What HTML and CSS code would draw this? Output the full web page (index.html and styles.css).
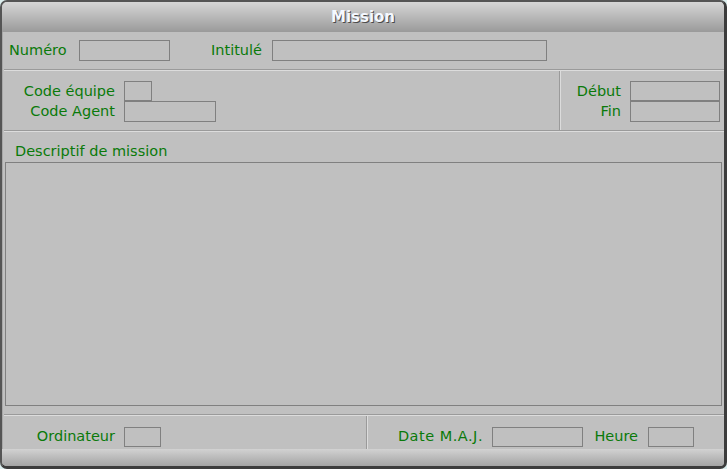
FILE: index.html
```html
<!DOCTYPE html>
<html lang="fr">
<head>
<meta charset="utf-8">
<title>Mission</title>
<link rel="stylesheet" href="styles.css">
</head>
<body>
<div class="window">
  <div class="titlebar"><span class="title">Mission</span></div>
  <div class="content">
    <div class="row1">
      <span class="lbl w-num">Numéro</span>
      <span class="field f-num"></span>
      <span class="lbl w-int">Intitulé</span>
      <span class="field f-int"></span>
    </div>
    <div class="groove-h"></div>
    <div class="sec2">
      <div class="panel-left grid-left">
        <span class="lbl r">Code équipe</span><span class="field f-eq top"></span>
        <span class="lbl r">Code Agent</span><span class="field f-ag"></span>
      </div>
      <div class="groove-v"></div>
      <div class="panel-right grid-right">
        <span class="lbl r">Début</span><span class="field f-date top"></span>
        <span class="lbl r">Fin</span><span class="field f-date"></span>
      </div>
    </div>
    <div class="groove-h"></div>
    <div class="sec3">
      <div class="lbl desc">Descriptif de mission</div>
      <div class="memo"></div>
    </div>
    <div class="groove-h"></div>
    <div class="sec4">
      <div class="foot-left">
        <span class="lbl r w-ord">Ordinateur</span>
        <span class="field f-ord"></span>
      </div>
      <div class="groove-v"></div>
      <div class="foot-right">
        <span class="lbl r w-maj">Date M.A.J.</span>
        <span class="field f-maj"></span>
        <span class="lbl r w-heure">Heure</span>
        <span class="field f-heure"></span>
      </div>
    </div>
  </div>
  <div class="bottombar"></div>
</div>
</body>
</html>
```
FILE: styles.css
```css
html, body {
  margin: 0;
  padding: 0;
  background: #dceeee;
}
body {
  width: 727px;
  height: 469px;
  overflow: hidden;
  font-family: "DejaVu Sans", Verdana, sans-serif;
  font-size: 14.5px;
}
.window {
  box-sizing: border-box;
  width: 727px;
  height: 469px;
  border: 2px solid #555;
  border-right: 3px solid #3c3c3c;
  border-bottom: 3px solid #3c3c3c;
  border-radius: 7px;
  background: #c0c0c0;
  box-shadow: inset 1px 0 0 #a8a8a8;
  overflow: hidden;
  display: flex;
  flex-direction: column;
}
.titlebar {
  height: 30px;
  flex: none;
  background: linear-gradient(#d6d6d6, #b8b8b8 50%, #9a9a9a);
  display: flex;
  align-items: center;
  justify-content: center;
}
.title {
  font-weight: bold;
  font-size: 15px;
  color: #f4f8ff;
  text-shadow: 1px 1px 0 #4a4a4a;
  line-height: 17px;
  padding-top: 1px;
}
.content {
  flex: none;
  padding: 0 0 0 2px;
  display: flex;
  flex-direction: column;
}
.lbl {
  color: #0a7a0a;
  line-height: 17px;
  white-space: nowrap;
}
.r { text-align: right; }
.field {
  box-sizing: border-box;
  display: block;
  border: 1px solid #808080;
  height: 21px;
  background: #c0c0c0;
}
.field.top { height: 20px; }
.groove-h {
  height: 1px;
  border-bottom: 1px solid #dcdcdc;
  background: #9a9a9a;
  flex: none;
}
.groove-v {
  width: 1px;
  border-right: 1px solid #dcdcdc;
  background: #9a9a9a;
  flex: none;
}
.row1 {
  height: 37px;
  display: flex;
  align-items: center;
  padding-left: 5px;
}
.w-num { width: 70px; }
.f-num { width: 91px; }
.w-int { width: 61px; margin-left: 41px; }
.f-int { width: 275px; }

.sec2 {
  height: 59px;
  display: flex;
}
.panel-left {
  width: 555px;
}
.panel-right {
  flex: 1;
}
.grid-left, .grid-right {
  display: grid;
  column-gap: 9px;
  align-content: start;
  align-items: center;
  padding-top: 10px;
}
.grid-left { grid-template-columns: 111px auto; justify-items: start; }
.grid-left .lbl, .grid-right .lbl { justify-self: end; }
.grid-right { grid-template-columns: 60px auto; justify-items: start; }
.f-eq { width: 28px; }
.f-ag { width: 92px; }
.f-date { width: 90px; }

.sec3 {
  height: 282px;
  display: flex;
  flex-direction: column;
}
.desc {
  padding: 11px 0 0 11px;
}
.memo {
  box-sizing: border-box;
  margin: 2px 0 0 1px;
  width: 717px;
  height: 244px;
  border: 1px solid #808080;
}

.sec4 {
  height: 33px;
  display: flex;
}
.foot-left {
  width: 362px;
  display: flex;
  align-items: flex-start;
  padding-top: 11px;
  gap: 9px;
}
.foot-right {
  flex: 1;
  display: flex;
  align-items: flex-start;
  padding-top: 11px;
}
.foot-left .lbl, .foot-right .lbl { padding-top: 1px; }
.w-ord { width: 111px; }
.f-ord { width: 37px; height: 20px; }
.w-maj { width: 115px; margin-right: 9px; letter-spacing: 0.5px; }
.f-maj { width: 91px; height: 20px; }
.w-heure { width: 44px; margin: 0 10px 0 11px; }
.f-heure { width: 46px; height: 20px; }

.bottombar {
  flex: 1;
  background: linear-gradient(#d2d2d2, #c4c4c4 30%, #a4a4a4);
}
```
